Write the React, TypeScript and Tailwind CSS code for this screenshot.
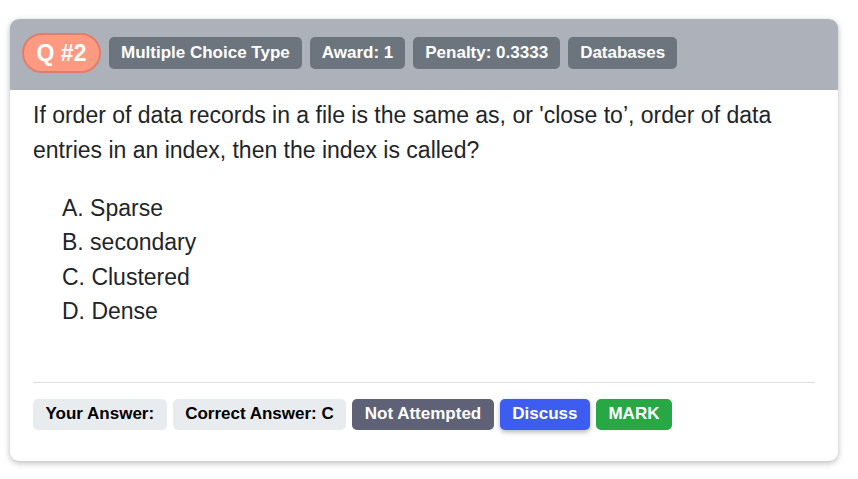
import React from "react";

export default function App() {
  const font = { fontFamily: '"Liberation Sans", Arial, sans-serif' };
  const tags = ["Multiple Choice Type", "Award: 1", "Penalty: 0.3333", "Databases"];
  const options = ["A. Sparse", "B. secondary", "C. Clustered", "D. Dense"];
  return (
    <div className="w-[858px] h-[479px] bg-white pt-[19px] pl-[10px]" style={font}>
      <div className="w-[828px] h-[442px] rounded-[9px] bg-white shadow-[0_2px_6px_rgba(0,0,0,0.28)] overflow-hidden flex flex-col">
        <div className="h-[71px] shrink-0 bg-[#adb2ba] flex items-center pl-[12px] pb-[3px] gap-[8px]">
          <span className="h-[40px] w-[79px] rounded-full bg-[#ff9a82] border-2 border-[#de7e6c] text-white font-bold text-[23px] flex items-center justify-center">
            Q #2
          </span>
          {tags.map((t) => (
            <span
              key={t}
              className="h-[32px] px-[12px] rounded-[5px] bg-[#6c757d] text-white font-bold text-[17px] flex items-center"
            >
              {t}
            </span>
          ))}
        </div>
        <div className="flex-1 px-[23px] pt-[8px] text-[#212529] flex flex-col">
          <p className="text-[23px] leading-[35px]">
            If order of data records in a file is the same as, or 'close to’, order of data entries in an index, then the index is called?
          </p>
          <ul className="mt-[23px] pl-[29px] text-[23px] leading-[34.4px]">
            {options.map((o) => (
              <li key={o}>{o}</li>
            ))}
          </ul>
          <div className="mt-[53px] border-t border-[#dcdde1]" />
          <div className="mt-[16px] flex gap-[6px]">
            <span className="h-[31px] px-[12.5px] rounded-[5px] bg-[#e9ecef] text-black font-bold text-[17px] flex items-center">
              Your Answer:
            </span>
            <span className="h-[31px] px-[12.5px] rounded-[5px] bg-[#e9ecef] text-black font-bold text-[17px] flex items-center">
              Correct Answer: C
            </span>
            <span className="h-[31px] px-[12.5px] rounded-[5px] bg-[#5f6177] text-white font-bold text-[17px] flex items-center">
              Not Attempted
            </span>
            <span className="h-[31px] px-[12.5px] rounded-[5px] bg-[#3d5cf0] text-white font-bold text-[17px] flex items-center shadow-[0_2px_5px_rgba(0,0,0,0.3)]">
              Discuss
            </span>
            <span className="h-[31px] px-[12.5px] rounded-[5px] bg-[#28a745] text-white font-bold text-[17px] flex items-center">
              MARK
            </span>
          </div>
        </div>
      </div>
    </div>
  );
}
